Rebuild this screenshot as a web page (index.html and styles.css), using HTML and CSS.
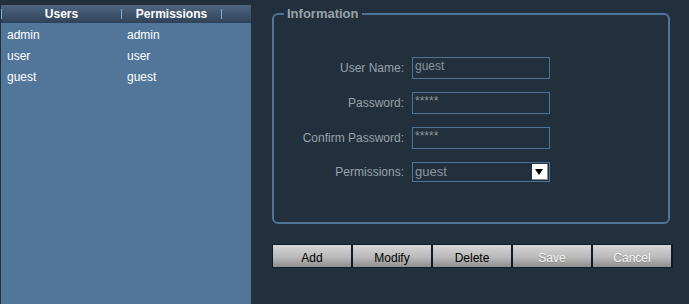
FILE: index.html
```html
<!DOCTYPE html>
<html lang="en">
<head>
    <meta charset="UTF-8" />
    <title>Users</title>
    <link rel="stylesheet" href="styles.css">
</head>
<body>
    <div class="page">
        <div class="users">
            <div class="users-head">
                <span class="sep"></span>
                <span class="col">Users</span>
                <span class="sep"></span>
                <span class="col col-perm">Permissions</span>
                <span class="sep"></span>
            </div>
            <ul class="users-list">
                <li><span>admin</span><span>admin</span></li>
                <li><span>user</span><span>user</span></li>
                <li><span>guest</span><span>guest</span></li>
            </ul>
        </div>

        <div class="detail">
            <fieldset class="info">
                <legend>Information</legend>
                <div class="form">
                    <label>User Name:</label>
                    <div class="field">guest</div>
                    <label>Password:</label>
                    <div class="field">*****</div>
                    <label>Confirm Password:</label>
                    <div class="field">*****</div>
                    <label>Permissions:</label>
                    <div class="field select">guest<span class="arrow"></span></div>
                </div>
            </fieldset>

            <div class="buttons">
                <button>Add</button>
                <button>Modify</button>
                <button>Delete</button>
                <button disabled>Save</button>
                <button disabled>Cancel</button>
            </div>
        </div>
    </div>
</body>
</html>
```

FILE: styles.css
```css
:root {
    --bg: #22303e;
    --panel: #52769a;
    --line: #4f7498;
    --label: #9aa2a9
}

* {
    box-sizing: border-box
}

body {
    margin: 0;
    background: var(--bg);
    font-family: "Liberation Sans", Arial, sans-serif;
    font-size: 12px;
    overflow: hidden
}

.page {
    display: flex;
    height: 304px
}

.users {
    width: 250px;
    margin: 5px 0 0 1px;
    background: var(--panel);
    display: flex;
    flex-direction: column
}

.users-head {
    height: 18px;
    display: flex;
    align-items: center;
    background: linear-gradient(#4e6682, #2f4259);
    color: #fff;
    font-weight: bold;
    font-size: 12px
}

.sep {
    width: 1px;
    height: 10px;
    background: #7fb0dc
}

.col {
    width: 119px;
    text-align: center
}

.col-perm {
    width: 99px
}

.users-list {
    list-style: none;
    margin: 2px 0 0;
    padding: 0;
    color: #fff
}

.users-list li {
    height: 21px;
    line-height: 21px;
    display: flex;
    padding-left: 6px
}

.users-list li span {
    width: 120px
}

.detail {
    margin-left: 21px;
    padding-top: 6px
}

.info {
    width: 398px;
    height: 218px;
    margin: 0;
    padding: 0;
    border: 2px solid var(--line);
    border-radius: 6px
}

.info legend {
    margin-left: 10px;
    padding: 0 3px;
    color: var(--label);
    font-weight: bold;
    font-size: 13px
}

.form {
    display: grid;
    grid-template-columns: 130px 138px;
    column-gap: 8px;
    row-gap: 13px;
    align-items: center;
    margin-top: 36px
}

.form label {
    text-align: right;
    color: var(--label)
}

.field {
    height: 22px;
    border: 1px solid var(--line);
    color: #8b9399;
    padding: 1px 2px;
    line-height: 14px
}

.field.select {
    height: 20px;
    position: relative;
    line-height: 18px;
    padding-top: 0;
    font-size: 13px
}

.arrow {
    position: absolute;
    right: 1px;
    top: 1px;
    width: 16px;
    height: 16px;
    background: #fff;
    border-right: 1px solid #8a8a8a;
    border-bottom: 1px solid #8a8a8a
}

.arrow::after {
    content: "";
    position: absolute;
    left: 3px;
    top: 5px;
    border: 4px solid transparent;
    border-top: 6px solid #000;
    border-bottom: 0
}

.buttons {
    display: flex;
    gap: 2px;
    margin-top: 20px;
    border: 1px solid #0f1b26;
    width: 401px;
    background: #0f1b26
}

.buttons button {
    width: 78px;
    height: 22px;
    margin: 0;
    padding: 3px 0 0;
    border: 0;
    background: linear-gradient(#d6d6d6, #b9b9b9 55%, #8f8f8f);
    font-family: inherit;
    font-size: 12px;
    color: #000
}

.buttons button[disabled] {
    color: #f4f4f4;
    text-shadow: 0 1px 0 #8a8a8a
}
```
